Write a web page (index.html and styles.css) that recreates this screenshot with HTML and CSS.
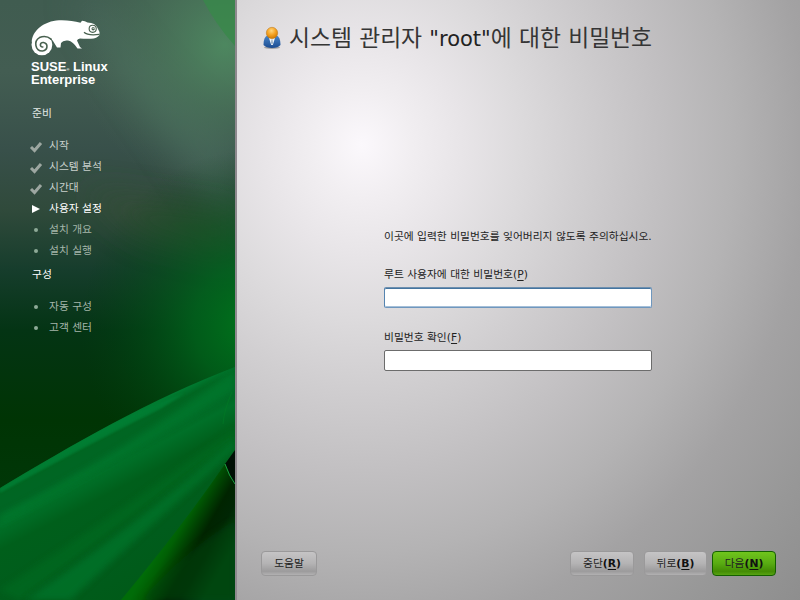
FILE: index.html
```html
<!DOCTYPE html>
<html lang="ko">
<head>
<meta charset="utf-8">
<title>SUSE Linux Enterprise</title>
<link rel="stylesheet" href="styles.css">
</head>
<body>
<div class="installer">
  <aside class="sidebar">
    <svg class="backdrop" viewBox="0 0 235 600" aria-hidden="true">
      <defs>
        <linearGradient id="base" x1="0" y1="0" x2="0" y2="1">
          <stop offset="0" stop-color="#405c50"/>
          <stop offset=".12" stop-color="#435d52"/>
          <stop offset=".25" stop-color="#38504a"/>
          <stop offset=".35" stop-color="#304a3b"/>
          <stop offset=".45" stop-color="#163d2c"/>
          <stop offset=".55" stop-color="#043414"/>
          <stop offset=".7" stop-color="#003404"/>
          <stop offset="1" stop-color="#003c0c"/>
        </linearGradient>
        <radialGradient id="topGlow" gradientUnits="userSpaceOnUse" cx="225" cy="45" r="150">
          <stop offset="0" stop-color="#4f8f62" stop-opacity=".85"/>
          <stop offset="1" stop-color="#4c7058" stop-opacity="0"/>
        </radialGradient>
        <radialGradient id="rightGlow" gradientUnits="userSpaceOnUse" cx="255" cy="325" r="175">
          <stop offset="0" stop-color="#00761c"/>
          <stop offset=".35" stop-color="#00681c" stop-opacity=".75"/>
          <stop offset="1" stop-color="#004010" stop-opacity="0"/>
        </radialGradient>
        <linearGradient id="leaf" gradientUnits="userSpaceOnUse" x1="75" y1="445" x2="150" y2="590">
          <stop offset="0" stop-color="#007a30"/>
          <stop offset=".05" stop-color="#006622"/>
          <stop offset=".15" stop-color="#006624"/>
          <stop offset=".23" stop-color="#007028"/>
          <stop offset=".36" stop-color="#005f1b"/>
          <stop offset=".7" stop-color="#005c1c"/>
          <stop offset="1" stop-color="#005a18"/>
        </linearGradient>
        <linearGradient id="fold" gradientUnits="userSpaceOnUse" x1="166" y1="535" x2="222" y2="567">
          <stop offset="0" stop-color="#006c08"/>
          <stop offset=".15" stop-color="#006004"/>
          <stop offset=".5" stop-color="#002400"/>
          <stop offset=".68" stop-color="#002604"/>
          <stop offset="1" stop-color="#004812"/>
        </linearGradient>
        <filter id="soft3"><feGaussianBlur stdDeviation="3"/></filter>
        <filter id="soft1"><feGaussianBlur stdDeviation="1"/></filter>
        <filter id="soft20" x="-50%" y="-50%" width="200%" height="200%"><feGaussianBlur stdDeviation="16"/></filter>
        <clipPath id="leafClip"><path d="M0 488C70 446 150 399 235 367V451Q180 528 122 600H0Z"/></clipPath>
      </defs>
      <rect width="235" height="600" fill="url(#base)"/>
      <path d="M100 0Q180 110 235 130V240Q170 150 70 0Z" fill="#4b6c60" opacity=".55" filter="url(#soft20)"/>
      <path d="M80 190L235 215V260L140 235Z" fill="#355035" opacity=".7" filter="url(#soft20)"/>
      <rect width="235" height="600" fill="url(#topGlow)"/>
      <path d="M203 0Q216 25 235 46V0Z" fill="#38884a" opacity=".8"/>
      <rect width="235" height="600" fill="url(#rightGlow)"/>
      <path d="M0 488C70 446 150 399 235 367V600H0Z" fill="url(#leaf)"/>
      <g clip-path="url(#leafClip)">
        <path d="M0 488C70 446 130 411 185 393L160 409Q80 448 0 493Z" fill="#008036" filter="url(#soft1)" opacity=".75"/>
        <path d="M0 515Q120 455 235 369V391Q120 460 0 525Z" fill="#007a2d" filter="url(#soft3)" opacity=".7"/>
        <path d="M0 590Q120 512 235 428V440Q120 525 20 600Z" fill="#007024" filter="url(#soft3)" opacity=".5"/>
        <path d="M25 600Q140 522 235 438V450Q140 535 70 600Z" fill="#00742a" filter="url(#soft3)" opacity=".75"/>
      </g>
      <path d="M225 464L235 484V600H121Q181 528 225 464Z" fill="url(#fold)"/>
      <path d="M235 520Q180 555 142 600H235Z" fill="#004410" filter="url(#soft3)" opacity=".55"/>
      <path d="M225 464L235 450V485Z" fill="#001004"/>
      <path d="M225 464Q229 476 235 484" fill="none" stroke="#18a040"/>
      <path d="M232 392Q224 410 223 424" fill="none" stroke="#007c24" opacity=".6"/>
    </svg>
    <header class="brand">
      <svg class="chameleon" viewBox="0 0 70 37" role="img" aria-label="SUSE">
        <path fill="#fff" d="M.8 22C1 11 13 1 28 .3C36 0 43 1 49.500 2.700L51 .8Q54 1 56.500 2.600Q64.500 3 66.500 8Q69 11.500 68.500 15Q66 18.600 60 18.800Q53 19 49 18.400Q46.500 18.600 46 20.500L49 27L51 28.600H46.500Q42 21.500 37 20.600Q32 20 30 23L29.500 27.500H26L22 21L20 18.500Z"/>
        <circle cx="10.900" cy="24.800" r="10.400" fill="#fff"/>
        <path d="M20 19.200Q15 14.800 8.500 17.600C2.500 21 4 31.200 11.500 31C17 30.500 17.500 23.500 12.500 22.500C8.800 22.200 8.200 26.800 11.800 27" fill="none" stroke="#48614f" stroke-width="1.600" stroke-linecap="round"/>
        <circle cx="61.700" cy="8.800" r="4.100" fill="#48614f"/><circle cx="61.700" cy="8.800" r="3" fill="#fff"/>
        <circle cx="62.200" cy="8.800" r="1.700" fill="#48614f"/><path d="M61.500 8.300h2" stroke="#fff" stroke-width=".8"/>
        <path d="M53 12.200Q57 15.900 68.500 14.300" fill="none" stroke="#48614f" stroke-width="1.200"/>
      </svg>
      <div class="wordmark">SUSE<span class="reg">®</span> Linux<br>Enterprise</div>
    </header>
    <nav class="steps">
      <h2>준비</h2>
      <ul>
        <li class="done"><svg viewBox="0 0 14 14"><path d="M2 8L5.500 11.500L12 4"/></svg>시작</li>
        <li class="done"><svg viewBox="0 0 14 14"><path d="M2 8L5.500 11.500L12 4"/></svg>시스템 분석</li>
        <li class="done"><svg viewBox="0 0 14 14"><path d="M2 8L5.500 11.500L12 4"/></svg>시간대</li>
        <li class="current"><svg viewBox="0 0 14 14"><path d="M3 3L11 7L3 11Z"/></svg>사용자 설정</li>
        <li><svg viewBox="0 0 14 14"><circle cx="7" cy="7" r="2"/></svg>설치 개요</li>
        <li><svg viewBox="0 0 14 14"><circle cx="7" cy="7" r="2"/></svg>설치 실행</li>
      </ul>
      <h2>구성</h2>
      <ul>
        <li><svg viewBox="0 0 14 14"><circle cx="7" cy="7" r="2"/></svg>자동 구성</li>
        <li><svg viewBox="0 0 14 14"><circle cx="7" cy="7" r="2"/></svg>고객 센터</li>
      </ul>
    </nav>
  </aside>
  <main class="content">
    <header class="title">
      <svg viewBox="0 0 20 24" aria-hidden="true">
        <defs>
          <radialGradient id="head" cx=".45" cy=".3" r=".7"><stop offset="0" stop-color="#ffd67c"/><stop offset=".5" stop-color="#f6a526"/><stop offset="1" stop-color="#cf7800"/></radialGradient>
          <linearGradient id="suit" x1="0" y1="0" x2="0" y2="1"><stop offset="0" stop-color="#4a86c8"/><stop offset="1" stop-color="#1b4c92"/></linearGradient>
        </defs>
        <ellipse cx="10" cy="21.500" rx="8" ry="1.500" fill="#777" opacity=".6"/>
        <path d="M1.500 19Q1.500 10 6 9.500H14Q18.500 10 18.500 19Q16 22 10 22T1.500 19Z" fill="url(#suit)"/>
        <path d="M7 12H13L10.800 19H9.200Z" fill="#f2f6fa"/><path d="M9.700 13.500h.6l.4 3.500-.7 1.500-.7-1.500Z" fill="#6888a8"/>
        <circle cx="10" cy="7" r="5.700" fill="url(#head)" stroke="#b87618" stroke-width=".5"/>
      </svg>
      <h1>시스템 관리자 <span>"root"</span>에 대한 비밀번호</h1>
    </header>
    <form class="form">
      <p>이곳에 입력한 비밀번호를 잊어버리지 않도록 주의하십시오.</p>
      <label for="pw">루트 사용자에 대한 비밀번호(<u>P</u>)</label>
      <input id="pw" class="focused" type="password">
      <label for="confirm">비밀번호 확인(<u>F</u>)</label>
      <input id="confirm" type="password">
    </form>
    <footer class="actions">
      <button class="help">도움말</button>
      <button class="abort">중단<b>(<u>R</u>)</b></button>
      <button class="back">뒤로<b>(<u>B</u>)</b></button>
      <button class="next">다음<b>(<u>N</u>)</b></button>
    </footer>
  </main>
</div>
</body>
</html>
```

FILE: styles.css
```css
* { box-sizing: border-box; margin: 0; padding: 0; }
body {
  width: 800px;
  height: 600px;
  overflow: hidden;
  font: 10.75px/15px "DejaVu Sans", "Noto Sans CJK KR", sans-serif;
  color: #222;
}
.installer { display: grid; grid-template-columns: 237px 563px; height: 600px; }

.sidebar {
  position: relative;
  border-right: 2px solid #8e898e;
  overflow: hidden;
  color: #fff;
}
.backdrop { position: absolute; inset: 0; width: 235px; height: 600px; }
.brand, .steps { position: relative; }
.brand { padding: 20px 0 0 31px; height: 106px; }
.chameleon { display: block; width: 70px; height: 37px; }
.wordmark {
  margin-top: 3px;
  font: bold 13px/13px "Liberation Sans", sans-serif;
}
.reg { font-size: 4px; line-height: 0; }
.steps h2 {
  height: 15px;
  padding-left: 32px;
  font-size: inherit;
  font-weight: normal;
  color: #e4eae6;
}
.steps ul { list-style: none; padding: 14px 0 0; }
.steps ul + h2 { margin-top: 6px; color: #fff; }
.steps li {
  display: flex;
  align-items: center;
  height: 21px;
  padding-left: 29px;
  gap: 6px;
  color: #a5b6aa;
}
.steps svg { width: 14px; height: 14px; fill: #8eaa98; }
.steps .done { color: #c9d1cc; }
.steps .done svg { fill: none; stroke: #9da7a1; stroke-width: 3; }
.steps .current { color: #fff; }
.steps .current svg { fill: #fff; }

.content {
  display: flex;
  flex-direction: column;
  background: radial-gradient(ellipse 620px 680px at 125px 145px,
    #fbf8fc 0, #f1eef1 8%, #e8e5e8 16%, #dcdadc 26%, #d1cfd1 35%,
    #c2c0c2 48%, #b4b3b4 60%, #a3a2a3 72%, #979797 86%, #8c8c8c 100%);
}
.title {
  display: flex;
  align-items: center;
  height: 76px;
  padding-left: 25px;
  gap: 7px;
}
.title svg { width: 20px; height: 24px; }
.title h1 {
  font-size: 22.8px;
  line-height: 30px;
  font-weight: normal;
  white-space: nowrap;
  color: #353535;
}
.title h1 span { font-size: 21px; color: #222; }
.form {
  display: flex;
  flex-direction: column;
  width: 268px;
  margin: 153px 0 0 147px;
  white-space: nowrap;
}
.form p { margin-bottom: 23px; }
.form u, .actions u { text-underline-offset: 2px; text-decoration-thickness: 1px; }
.form input {
  height: 21px;
  margin: 5px 0 22px;
  border: 1px solid #6c6c6c;
  border-radius: 2px;
  background: #fff;
  outline: 0;
}
.form .focused {
  border-color: #6d8faf #6f97be #6f97be #5584b0;
  box-shadow: inset 0 1px #44749f, inset 0 -1px #a5bfd8;
}
.actions { display: flex; margin: auto 24px 24px; height: 25px; }
.actions button {
  height: 25px;
  font: inherit;
  color: #222;
  border: 1px solid #9a999a;
  border-radius: 4px;
  background: linear-gradient(#c5c4c5, #b4b3b4 50%, #9c9b9c 84%, #b2b1b2);
  white-space: nowrap;
}
.actions b { color: #111; }
.actions .help { width: 56px; margin-right: auto; }
.actions .abort { width: 64px; }
.actions .back { width: 63px; margin-left: 10px; }
.actions .next {
  width: 64px;
  margin-left: 5px;
  border-color: #146000;
  background: linear-gradient(#70c51d, #58ab12 50%, #438c04 84%, #57a312);
}
```
